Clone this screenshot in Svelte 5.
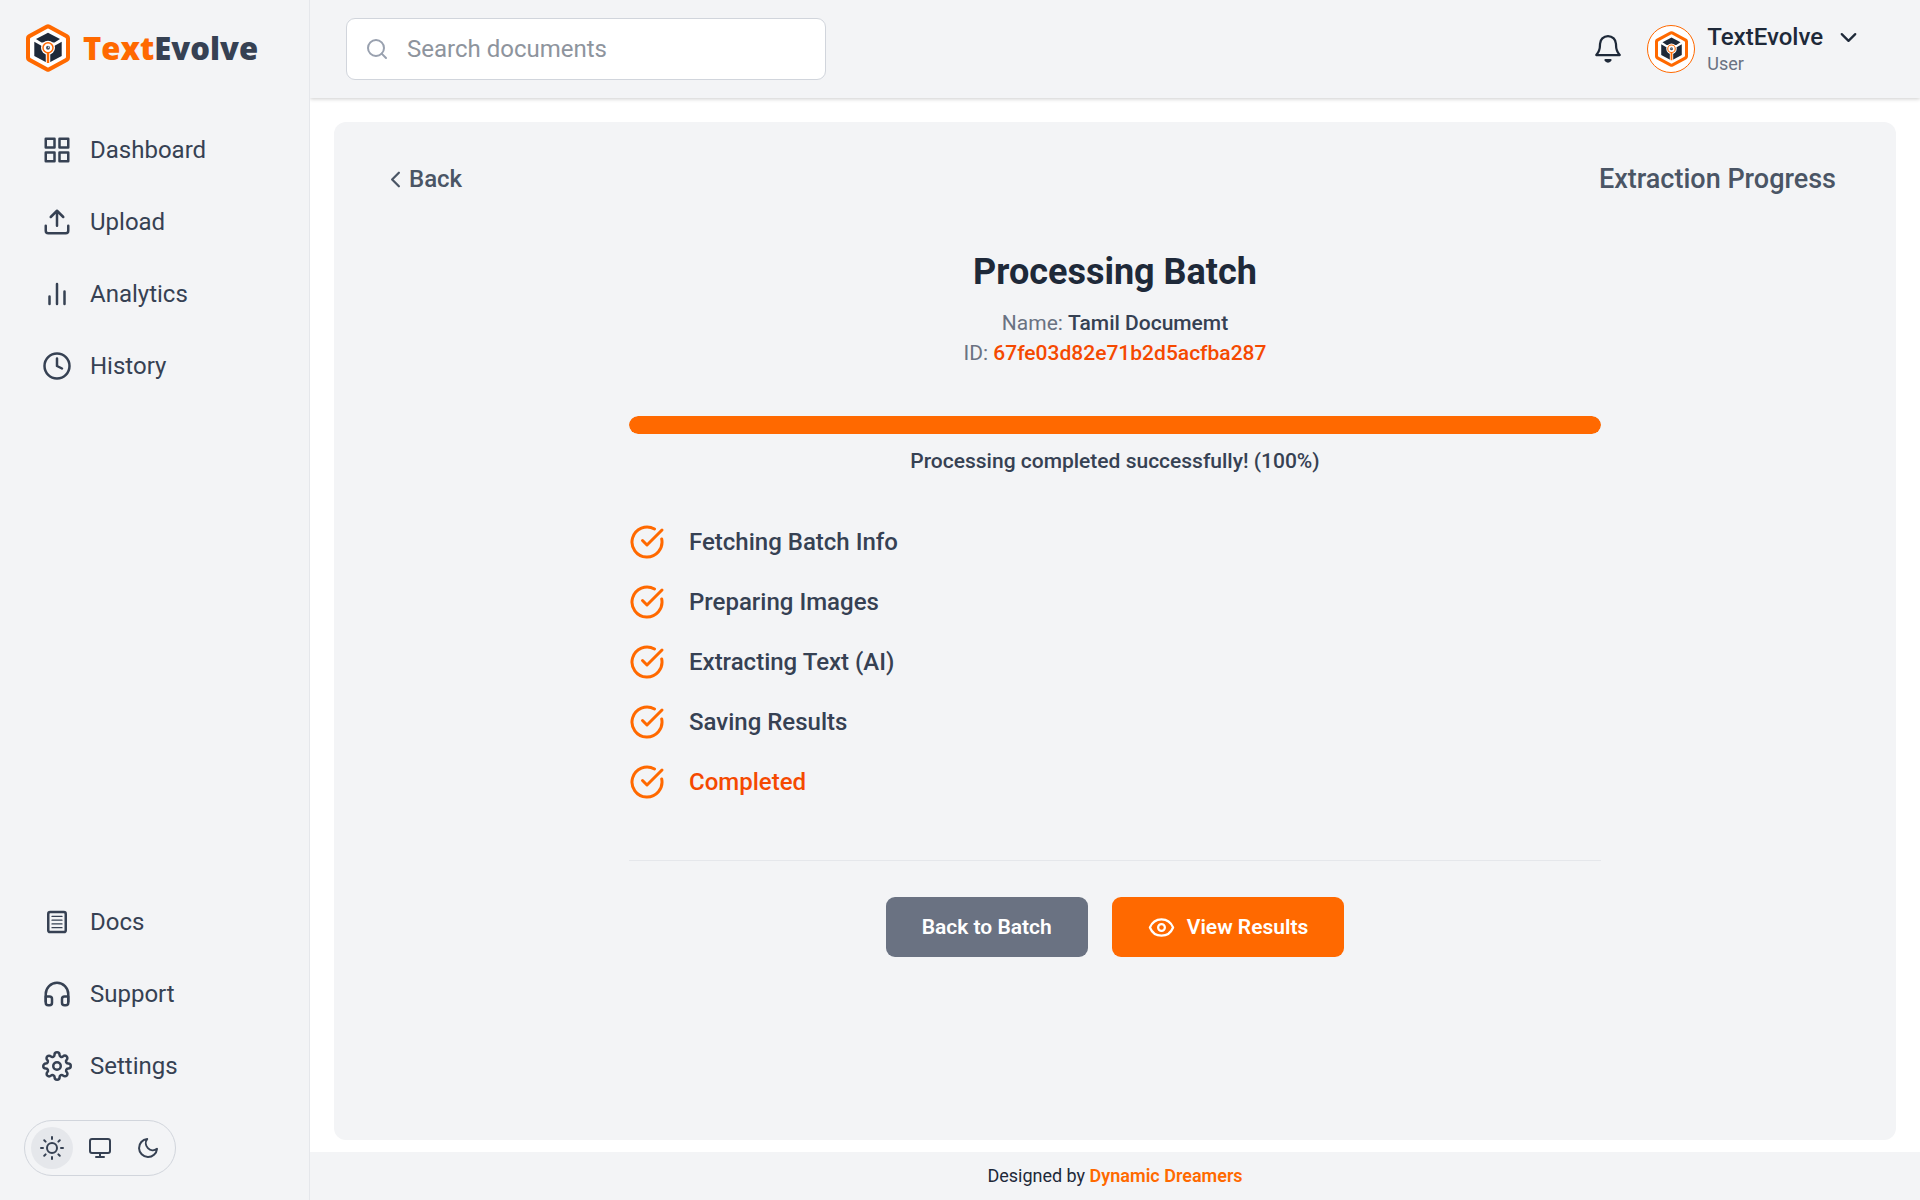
<script>
  const icons = {
    dashboard: '<rect x="3" y="3" width="7" height="7"/><rect x="14" y="3" width="7" height="7"/><rect x="14" y="14" width="7" height="7"/><rect x="3" y="14" width="7" height="7"/>',
    upload: '<path d="M21 15v4a2 2 0 0 1-2 2H5a2 2 0 0 1-2-2v-4M17 8l-5-5-5 5M12 3v12"/>',
    analytics: '<path d="M18 20V10M12 20V4M6 20v-6"/>',
    history: '<circle cx="12" cy="12" r="10"/><path d="M12 6v6l4 2"/>',
    docs: '<rect x="5" y="4" width="14" height="16" rx="1.5"/><path stroke-width="1" d="M8 7.5h8M8 10.5h8M8 13.5h8M8 16.5h8"/>',
    support: '<path d="M3 18v-6a9 9 0 0 1 18 0v6"/><path d="M21 19a2 2 0 0 1-2 2h-1a2 2 0 0 1-2-2v-3a2 2 0 0 1 2-2h3zM3 19a2 2 0 0 0 2 2h1a2 2 0 0 0 2-2v-3a2 2 0 0 0-2-2H3z"/>',
    settings: '<circle cx="12" cy="12" r="3"/><path d="M19.4 15a1.65 1.65 0 0 0 .33 1.82l.06.06a2 2 0 0 1 0 2.83 2 2 0 0 1-2.83 0l-.06-.06a1.65 1.65 0 0 0-1.82-.33 1.65 1.65 0 0 0-1 1.51V21a2 2 0 0 1-2 2 2 2 0 0 1-2-2v-.09A1.65 1.65 0 0 0 9 19.4a1.65 1.65 0 0 0-1.82.33l-.06.06a2 2 0 0 1-2.83 0 2 2 0 0 1 0-2.83l.06-.06a1.65 1.65 0 0 0 .33-1.82 1.65 1.65 0 0 0-1.51-1H3a2 2 0 0 1-2-2 2 2 0 0 1 2-2h.09A1.65 1.65 0 0 0 4.6 9a1.65 1.65 0 0 0-.33-1.82l-.06-.06a2 2 0 0 1 0-2.83 2 2 0 0 1 2.83 0l.06.06a1.65 1.65 0 0 0 1.82.33H9a1.65 1.65 0 0 0 1-1.51V3a2 2 0 0 1 2-2 2 2 0 0 1 2 2v.09a1.65 1.65 0 0 0 1 1.51 1.65 1.65 0 0 0 1.82-.33l.06-.06a2 2 0 0 1 2.83 0 2 2 0 0 1 0 2.83l-.06.06a1.65 1.65 0 0 0-.33 1.82V9a1.65 1.65 0 0 0 1.51 1H21a2 2 0 0 1 2 2 2 2 0 0 1-2 2h-.09a1.65 1.65 0 0 0-1.51 1z"/>',
    sun: '<circle cx="12" cy="12" r="5"/><path d="M12 1v2M12 21v2M4.22 4.22l1.42 1.42M18.36 18.36l1.42 1.42M1 12h2M21 12h2M4.22 19.78l1.42-1.42M18.36 5.64l1.42-1.42"/>',
    monitor: '<rect x="2" y="3" width="20" height="14" rx="2"/><path d="M8 21h8M12 17v4"/>',
    moon: '<path d="M21 12.79A9 9 0 1 1 11.21 3 7 7 0 0 0 21 12.79z"/>',
    search: '<circle cx="11" cy="11" r="8"/><path d="m21 21-4.35-4.35"/>',
    bell: '<path d="M2.6 16.8h18.8c-1.9-2-3-4.600-3-8.200V8A6.400 6.400 0 0 0 5.600 8v.6c0 3.600-1.100 6.200-3 8.200z"/><path d="M10 20.800c.8 1.600 3.200 1.600 4 0z"/>',
    down: '<path d="m6 9 6 6 6-6"/>',
    left: '<path d="m15 18-6-6 6-6"/>',
    check: '<path d="M21.801 10A10 10 0 1 1 17 3.335"/><path d="m9 11 3 3L22 4"/>',
    eye: '<path d="M1.700 12C3.500 7.500 7.400 4.700 12 4.700S20.500 7.500 22.300 12c-1.800 4.500-5.700 7.300-10.300 7.300S3.500 16.500 1.700 12z"/><circle cx="12" cy="12" r="3"/>'
  };

  const mainLinks = [
    ['dashboard', 'Dashboard'],
    ['upload', 'Upload'],
    ['analytics', 'Analytics'],
    ['history', 'History']
  ];
  const helpLinks = [
    ['docs', 'Docs'],
    ['support', 'Support'],
    ['settings', 'Settings']
  ];
  const themes = [
    ['sun', 'Light theme'],
    ['monitor', 'System theme'],
    ['moon', 'Dark theme']
  ];
  const steps = ['Fetching Batch Info', 'Preparing Images', 'Extracting Text (AI)', 'Saving Results', 'Completed'];

  let theme = $state('sun');
  let query = $state('');
  let progress = $state(100);
</script>

{#snippet icon(name, size)}
  <svg class="icon {size}" viewBox="0 0 24 24" aria-hidden="true">{@html icons[name]}</svg>
{/snippet}

{#snippet emblem(size)}
  <svg class={size} viewBox="0 0 44 48" aria-hidden="true">
    <path d="M22 4.3 40 14v20L22 43.700 4 34V14z" fill="#ff6900" stroke="#ff6900" stroke-width="8" stroke-linejoin="round" />
    <path d="M22 6 38.500 15v18L22 42 5.500 33V15z" fill="#fff" stroke="#fff" stroke-width="3" stroke-linejoin="round" />
    <path d="M22 8.700 34 15l-5.500 3.500h-13L10 15z" fill="#1e2939" />
    <path d="M8.300 17.800 22 25.500v13.700L8.300 32zM35.700 17.800 22 25.500v13.700L35.700 32z" fill="#1e2939" />
    <path d="M22 24v16" stroke="#fff" stroke-width="4.500" />
    <circle cx="22" cy="23.700" r="7" fill="#fff" />
    <path d="M22 29v10" stroke="#ff6900" stroke-width="2.400" />
    <circle cx="22" cy="23.700" r="5" fill="#fff" stroke="#ff6900" stroke-width="1.500" />
    <circle cx="22" cy="23.700" r="2" fill="#4a5565" />
    <circle cx="22.500" cy="23.200" r=".6" fill="#fff" />
  </svg>
{/snippet}

<div class="app">
  <aside class="sidebar">
    <a class="brand" href="#home">
      {@render emblem('brand-mark')}
      <span class="wordmark"><span class="accent">Text</span>Evolve</span>
    </a>
    <nav class="links" aria-label="Main">
      {#each mainLinks as [name, label]}
        <a class="link" href="#{name}">{@render icon(name, 's30')}{label}</a>
      {/each}
    </nav>
    <nav class="links lower" aria-label="Help">
      {#each helpLinks as [name, label]}
        <a class="link" href="#{name}">{@render icon(name, 's30')}{label}</a>
      {/each}
    </nav>
    <div class="themes">
      {#each themes as [name, label]}
        <button class="theme" class:active={theme === name} aria-label={label} aria-pressed={theme === name} onclick={() => (theme = name)}>
          {@render icon(name, 's24')}
        </button>
      {/each}
    </div>
  </aside>

  <div class="page">
    <header class="topbar">
      <label class="search">
        {@render icon('search', 's24')}
        <input type="search" placeholder="Search documents" aria-label="Search documents" bind:value={query} />
      </label>
      <div class="account">
        <button class="bell" aria-label="Notifications">{@render icon('bell', 's30')}</button>
        <button class="user">
          <span class="avatar">{@render emblem('avatar-mark')}</span>
          <span class="who">
            <span class="name">TextEvolve {@render icon('down', 's27')}</span>
            <span class="role">User</span>
          </span>
        </button>
      </div>
    </header>

    <main class="content">
      <section class="card">
        <div class="card-head">
          <button class="back">{@render icon('left', 's27')}Back</button>
          <h2>Extraction Progress</h2>
        </div>
        <div class="batch">
          <h1>Processing Batch</h1>
          <p class="detail">Name: <span class="batch-name">Tamil Documemt</span></p>
          <p class="detail">ID: <span class="batch-id">67fe03d82e71b2d5acfba287</span></p>
          <div class="track" role="progressbar" aria-label="Batch progress" aria-valuenow={progress} aria-valuemin="0" aria-valuemax="100">
            <div class="fill" style="width: {progress}%"></div>
          </div>
          <p class="status">Processing completed successfully! ({progress}%)</p>
          <ul class="steps">
            {#each steps as step, i}
              <li class:current={i === steps.length - 1}>{@render icon('check', 's36')}{step}</li>
            {/each}
          </ul>
          <div class="actions">
            <button class="action secondary">Back to Batch</button>
            <button class="action primary">{@render icon('eye', 's27')}View Results</button>
          </div>
        </div>
      </section>
    </main>

    <footer class="footer">Designed by&nbsp;<a href="#team">Dynamic Dreamers</a></footer>
  </div>
</div>

<style>
  :global(body) {
    margin: 0;
    background: #fff;
  }
  .app, .app :global(*) {
    box-sizing: border-box;
  }
  .app {
    display: flex;
    min-height: 100vh;
    font-family: Roboto, "Liberation Sans", sans-serif;
    font-size: 24px;
    line-height: 36px;
    color: #364153;
  }
  a {
    color: inherit;
    text-decoration: none;
  }
  button {
    font: inherit;
    color: inherit;
    background: none;
    border: 0;
    padding: 0;
    cursor: pointer;
  }
  h1, h2, p, ul {
    margin: 0;
    padding: 0;
  }
  .icon {
    flex: none;
    display: block;
    fill: none;
    stroke: currentColor;
    stroke-width: 2;
    stroke-linecap: round;
    stroke-linejoin: round;
  }
  .s24 { width: 24px; height: 24px; }
  .s27 { width: 27px; height: 27px; }
  .s30 { width: 30px; height: 30px; }
  .s36 { width: 36px; height: 36px; }

  .sidebar {
    flex: none;
    display: flex;
    flex-direction: column;
    width: 310px;
    padding-bottom: 24px;
    background: #f3f4f6;
    border-right: 1px solid #e5e7eb;
  }
  .brand {
    display: flex;
    align-items: center;
    gap: 13px;
    height: 96px;
    padding-left: 26px;
  }
  .brand-mark {
    width: 44px;
    height: 48px;
  }
  .wordmark {
    font-family: "Open Sans", sans-serif;
    font-size: 31px;
    font-weight: 800;
  }
  .accent {
    color: #ff6900;
  }
  .links {
    display: flex;
    flex-direction: column;
    gap: 12px;
    padding: 24px 24px 0;
  }
  .lower {
    margin-top: auto;
  }
  .link {
    display: flex;
    align-items: center;
    gap: 18px;
    height: 60px;
    padding: 0 18px;
  }
  .themes {
    display: flex;
    align-self: flex-start;
    gap: 6px;
    margin: 24px 24px 0;
    padding: 6px;
    border: 1px solid #d1d5dc;
    border-radius: 28px;
  }
  .theme {
    display: grid;
    place-items: center;
    width: 42px;
    height: 42px;
    border-radius: 50%;
  }
  .active {
    background: #e5e7eb;
  }

  .page {
    flex: 1;
    display: flex;
    flex-direction: column;
    min-width: 0;
  }
  .topbar {
    display: flex;
    align-items: center;
    justify-content: space-between;
    gap: 24px;
    height: 98px;
    padding: 0 58px 0 36px;
    background: #f3f4f6;
    box-shadow: 0 1px 4px rgba(0, 0, 0, 0.2);
    clip-path: inset(0 0 -8px 0);
  }
  .search {
    display: flex;
    align-items: center;
    gap: 18px;
    width: 480px;
    height: 62px;
    padding: 0 18px;
    color: #99a1af;
    background: #fff;
    border: 1px solid #d1d5dc;
    border-radius: 9px;
  }
  .search input {
    flex: 1;
    min-width: 0;
    padding: 0;
    font: inherit;
    color: #364153;
    background: none;
    border: 0;
    outline: 0;
  }
  .search input::placeholder {
    color: #8e949d;
    opacity: 1;
  }
  .account, .user {
    display: flex;
    align-items: center;
  }
  .account {
    gap: 24px;
    color: #1e2939;
  }
  .bell .icon {
    stroke-width: 1.8;
  }
  .user {
    gap: 12px;
    text-align: left;
  }
  .avatar {
    display: grid;
    place-items: center;
    width: 48px;
    height: 48px;
    background: #fff;
    border: 1px solid #ff6900;
    border-radius: 50%;
  }
  .avatar-mark {
    width: 33px;
    height: 36px;
  }
  .name {
    display: flex;
    align-items: center;
    gap: 12px;
    font-weight: 500;
    line-height: 30px;
  }
  .role {
    display: block;
    font-size: 18px;
    line-height: 24px;
    color: #6a7282;
  }

  .content {
    flex: 1;
    display: flex;
    padding: 24px 24px 12px;
  }
  .card {
    flex: 1;
    padding: 36px 48px;
    background: #f3f4f6;
    border-radius: 12px;
  }
  .card-head {
    display: flex;
    align-items: center;
    justify-content: space-between;
    height: 42px;
    padding-right: 12px;
    color: #4a5565;
  }
  .back {
    display: flex;
    align-items: center;
    font-weight: 500;
  }
  h2 {
    font-size: 27px;
    font-weight: 500;
  }
  .batch {
    max-width: 972px;
    margin: 0 auto;
    padding-top: 48px;
    font-size: 21px;
    line-height: 30px;
    text-align: center;
  }
  h1 {
    margin-bottom: 12px;
    font-size: 36px;
    font-weight: 700;
    line-height: 48px;
    color: #1e2939;
  }
  .detail {
    color: #6a7282;
  }
  .batch-name {
    font-weight: 500;
    color: #364153;
  }
  .batch-id {
    font-weight: 500;
    color: #f54900;
  }
  .track {
    height: 18px;
    margin: 48px 0 12px;
    background: #e5e7eb;
    border-radius: 9px;
    overflow: hidden;
  }
  .fill {
    height: 100%;
    background: #ff6900;
    border-radius: 9px;
  }
  .status {
    font-weight: 500;
  }
  .steps {
    display: grid;
    gap: 24px;
    margin-top: 48px;
    list-style: none;
    font-size: 24px;
    font-weight: 500;
    line-height: 36px;
  }
  .steps li {
    display: flex;
    align-items: center;
    gap: 24px;
  }
  .steps .icon {
    color: #ff6900;
  }
  .current {
    color: #f54900;
  }
  .actions {
    display: flex;
    justify-content: center;
    gap: 24px;
    margin-top: 60px;
    padding-top: 36px;
    border-top: 1px solid #e5e7eb;
  }
  .action {
    display: flex;
    align-items: center;
    gap: 12px;
    height: 60px;
    padding: 0 36px;
    font-weight: 600;
    color: #fff;
    border-radius: 9px;
  }
  .secondary {
    background: #6a7282;
  }
  .primary {
    background: #ff6900;
  }
  .footer {
    display: flex;
    align-items: center;
    justify-content: center;
    height: 48px;
    font-size: 18px;
    color: #1e2939;
    background: #f3f4f6;
  }
  .footer a {
    font-weight: 600;
    color: #ff6900;
  }
</style>
